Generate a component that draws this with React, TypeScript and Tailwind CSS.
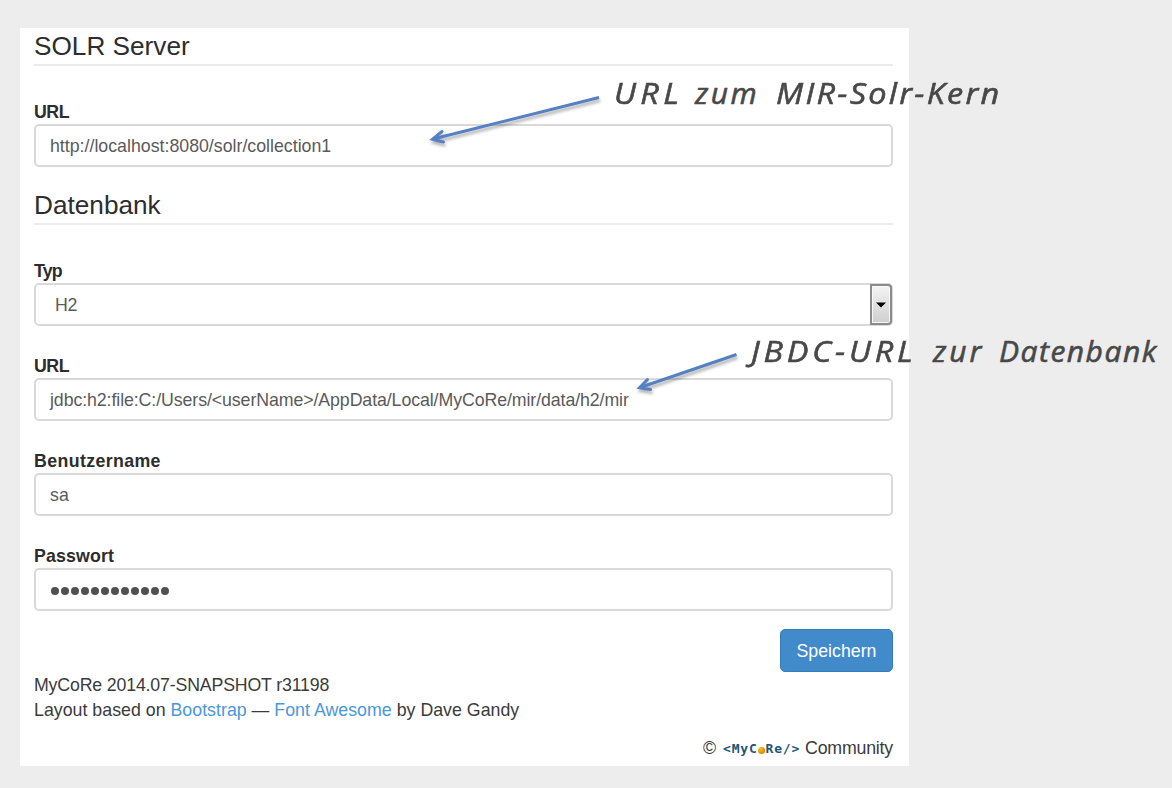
import type { ReactNode } from "react";

function Heading({ children, className }: { children: ReactNode; className: string }) {
  return (
    <h4 className={`flex items-end border-b-2 border-[#ebebeb] text-[26.2px] leading-[30px] text-[#2d2d2d] ${className}`}>
      {children}
    </h4>
  );
}

function Field({
  label,
  className,
  tracking = "tracking-[0.3px]",
  children,
}: {
  label: string;
  className: string;
  tracking?: string;
  children: ReactNode;
}) {
  return (
    <div className={className}>
      <label className={`block h-[24px] text-[17.75px] font-bold leading-[24px] text-[#2d2d2d] ${tracking}`}>{label}</label>
      {children}
    </div>
  );
}

const box =
  "flex h-[43px] items-center rounded-[5px] border-2 border-[#d9d9d9] bg-white px-[14px] text-[17.75px] leading-[24px] text-[#5a5a5a]";

function Arrow({ line, head, className }: { line: string; head: string; className: string }) {
  return (
    <svg
      viewBox="0 0 180 60"
      className={`pointer-events-none absolute h-[60px] w-[180px] overflow-visible drop-shadow-[1px_3px_1.5px_rgba(0,0,0,0.3)] ${className}`}
      fill="none"
      stroke="#5580c4"
      strokeWidth="3"
    >
      <path d={line} />
      <path d={head} strokeLinecap="round" strokeLinejoin="miter" />
    </svg>
  );
}

const note =
  "absolute flex whitespace-nowrap font-['Open_Sans','Noto_Sans',sans-serif] text-[30px] italic leading-[40px] text-[#484848] [-webkit-text-stroke:0.6px_#484848]";

export default function App() {
  return (
    <div className="relative h-[788px] w-[1172px] overflow-hidden bg-[#ededed] pl-[20px] pt-[28px] font-['Liberation_Sans',Arial,sans-serif]">
      <main className="h-[738px] w-[889px] bg-white pl-[14px] pr-[16px]">
        <Heading className="h-[38px] pb-[3px]">SOLR Server</Heading>
        <Field label="URL" tracking="tracking-[-0.5px]" className="mt-[34px]">
          <div className={box}>http://localhost:8080/solr/collection1</div>
        </Field>
        <Heading className="h-[58px] pb-[3px]">Datenbank</Heading>
        <Field label="Typ" tracking="tracking-[-0.8px]" className="mt-[34px]">
          <div className={`${box} relative pl-[19px]`}>
            <span className="tracking-[-0.4px]">H2</span>
            <span className="absolute -right-[1px] -top-[1px] flex h-[41px] w-[22px] items-center justify-center rounded-r-[4px] border-2 border-[#8b8b8b] bg-linear-to-b from-[#f3f3f3] to-[#cfcfcf] shadow-[inset_0_0_0_1px_#f7f7f7]">
              <svg viewBox="0 0 10 6" className="h-[6px] w-[10px]">
                <path d="M0 0.5h10L5 5.5z" fill="#000" />
              </svg>
            </span>
          </div>
        </Field>
        <Field label="URL" tracking="tracking-[-0.5px]" className="mt-[28px]">
          <div className={`${box} tracking-[-0.09px]`}>jdbc:h2:file:C:/Users/&lt;userName&gt;/AppData/Local/MyCoRe/mir/data/h2/mir</div>
        </Field>
        <Field label="Benutzername" tracking="tracking-[0.38px]" className="mt-[28px]">
          <div className={box}>sa</div>
        </Field>
        <Field label="Passwort" tracking="tracking-[0.15px]" className="mt-[28px]">
          <div className={`${box} gap-[2px] pl-[15px]`}>
            {Array.from({ length: 12 }, (_, i) => (
              <span key={i} className="mt-[2px] size-[8px] rounded-full bg-[#505050]" />
            ))}
          </div>
        </Field>
        <div className="mt-[18px] flex justify-end">
          <button className="h-[43px] w-[113px] rounded-[5px] border border-[#357ebd] bg-[#428bca] text-[17.75px] leading-[24px] text-white">
            Speichern
          </button>
        </div>
        <footer className="pt-px text-[17.75px] leading-[25px] text-[#3b3b3b]">
          <p className="tracking-[-0.17px]">MyCoRe 2014.07-SNAPSHOT r31198</p>
          <p className="tracking-[0.02px]">
            Layout based on <a className="text-[#4a98da]">Bootstrap</a> — <a className="text-[#4a98da]">Font Awesome</a> by Dave Gandy
          </p>
          <p className="mt-[12px] flex items-center justify-end">
            <span>©</span>
            <span className="ml-[7px] mr-[5px] flex items-center pt-px font-['DejaVu_Sans_Mono',monospace] text-[13px] font-bold leading-[25px] tracking-[0.8px] text-[#1c5672]">
              &lt;MyC
              <span className="mr-[1px] mt-[3px] size-[7px] rounded-full bg-radial-[at_35%_30%] from-[#ffc020] to-[#c87000]" />
              Re/&gt;
            </span>
            <span className="tracking-[-0.2px]">Community</span>
          </p>
        </footer>
      </main>

      <Arrow className="left-[425px] top-[90px]" line="M174 7.5L8 49" head="M17 41.5L7.5 49.2L18.5 52" />
      <Arrow className="left-[632px] top-[345px]" line="M104.5 9.5L8 42.5" head="M15.5 34.5L7.5 42.8L18.5 44.5" />

      <div className={`${note} left-[614px] top-[73px]`}>
        <span className="w-[81px] origin-left scale-x-108 tracking-[4px]">URL</span>
        <span className="w-[81px] tracking-[2.5px]">zum</span>
        <span className="origin-left scale-x-108 tracking-[2.1px]">MIR-Solr-Kern</span>
      </div>
      <div className={`${note} left-[751px] top-[331px]`}>
        <span className="w-[182px] origin-left scale-x-108 tracking-[3.5px]">JBDC-URL</span>
        <span className="w-[66px] tracking-[3px]">zur</span>
        <span className="tracking-[1.5px]">Datenbank</span>
      </div>
    </div>
  );
}
